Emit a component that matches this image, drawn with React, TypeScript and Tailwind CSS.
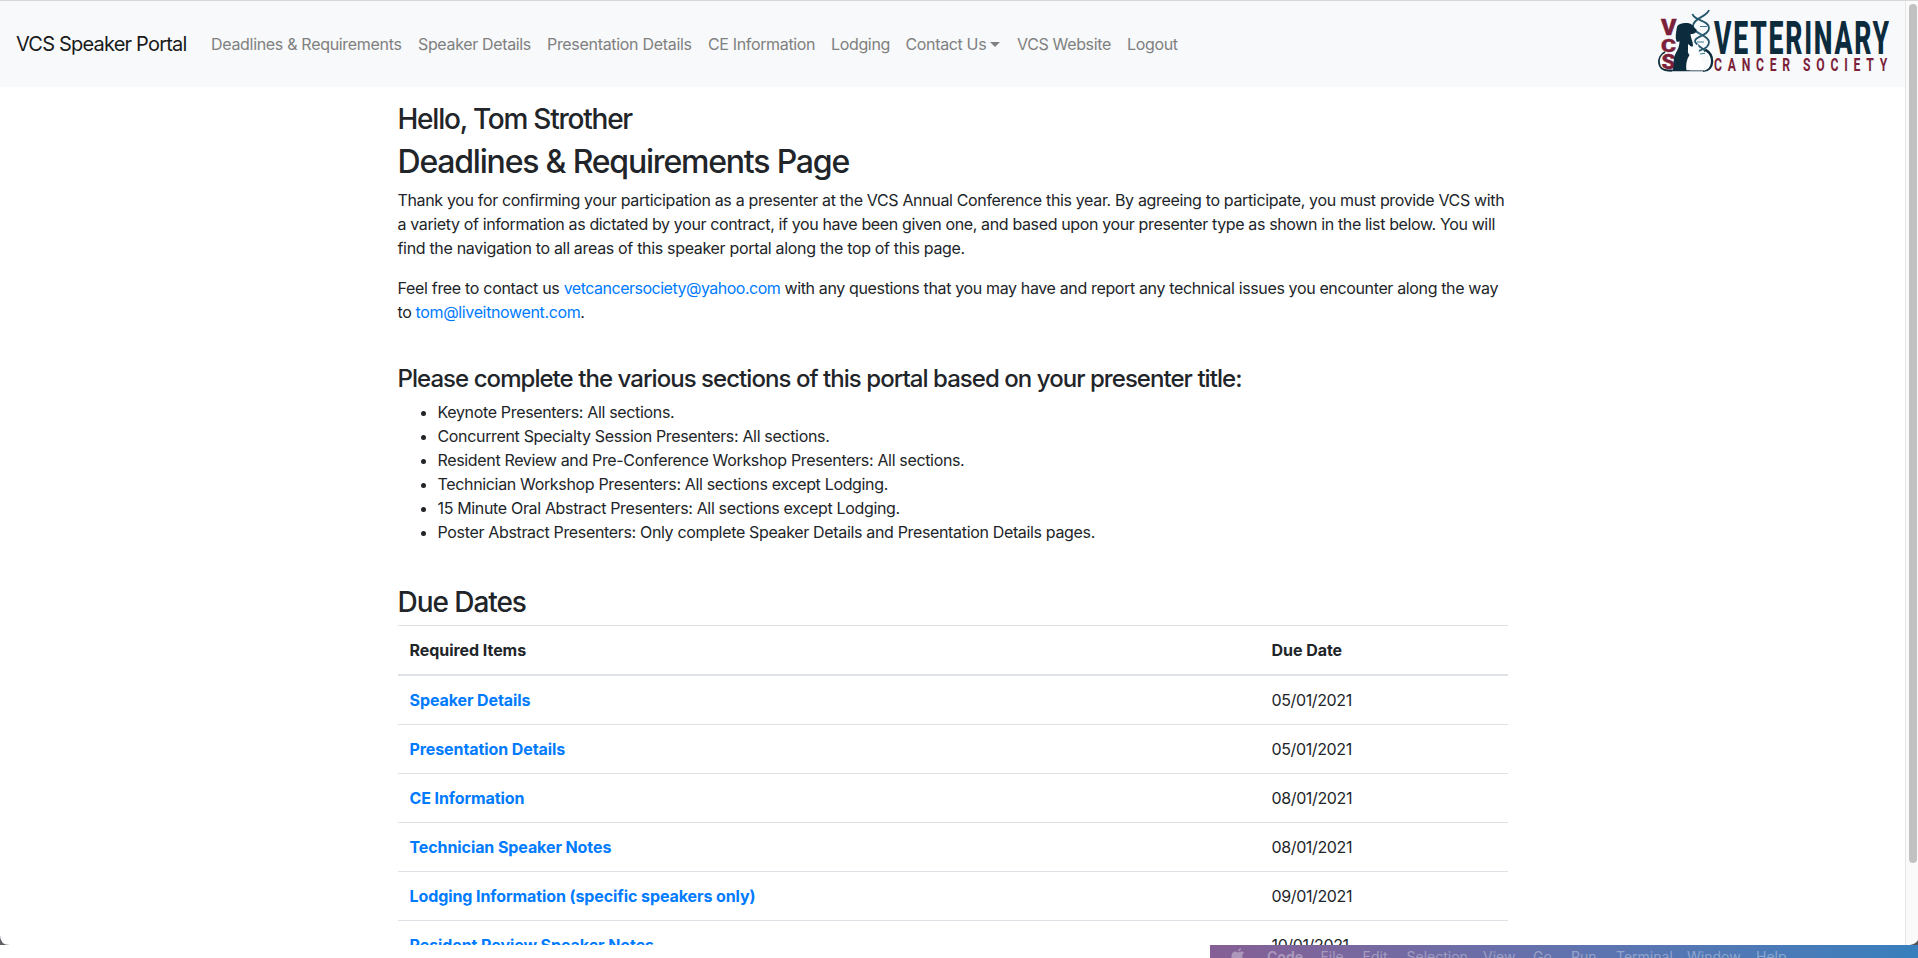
import React from "react";

const navLinks = [
  { label: "Deadlines & Requirements", cls: "w-[191px] tracking-[-0.31px]" },
  { label: "Speaker Details", cls: "w-[113px]" },
  { label: "Presentation Details", cls: "w-[145px] tracking-[-0.31px]" },
  { label: "CE Information", cls: "w-[107px]" },
  { label: "Lodging", cls: "w-[58.5px]" },
  { label: "Contact Us", cls: "w-[95.5px]", caret: true },
  { label: "VCS Website", cls: "w-[94px]" },
  { label: "Logout", cls: "w-[51px]" },
];

const sections = [
  "Keynote Presenters: All sections.",
  "Concurrent Specialty Session Presenters: All sections.",
  "Resident Review and Pre-Conference Workshop Presenters: All sections.",
  "Technician Workshop Presenters: All sections except Lodging.",
  "15 Minute Oral Abstract Presenters: All sections except Lodging.",
  "Poster Abstract Presenters: Only complete Speaker Details and Presentation Details pages.",
];

const dueDates = [
  ["Speaker Details", "05/01/2021"],
  ["Presentation Details", "05/01/2021"],
  ["CE Information", "08/01/2021"],
  ["Technician Speaker Notes", "08/01/2021"],
  ["Lodging Information (specific speakers only)", "09/01/2021"],
  ["Resident Review Speaker Notes", "10/01/2021"],
];

const menu = [
  { label: "Code", cls: "w-[53.5px] font-bold" },
  { label: "File", cls: "w-[42px]" },
  { label: "Edit", cls: "w-[44px]" },
  { label: "Selection", cls: "w-[76.5px]" },
  { label: "View", cls: "w-[50px]" },
  { label: "Go", cls: "w-[38px]" },
  { label: "Run", cls: "w-[45px]" },
  { label: "Terminal", cls: "w-[71px]" },
  { label: "Window", cls: "w-[69px]" },
  { label: "Help", cls: "w-[40px]" },
];

function Logo() {
  return (
    <svg width="240" height="70" viewBox="0 0 240 70" className="shrink-0" fontFamily="Roboto, sans-serif">
      <g fill="none" stroke="#24566c" strokeWidth="1.8">
        <path d="M60 1C58 8 44 9 44 17s16 9 16 16-8 7-14 11" />
        <path d="M43.500 5C45 12 60 11 60 19S46 27 46 32s13 8 14 16" />
        <path d="M51 17.500h7M48 33h7M49 24l4 2M51 45l6-1" strokeWidth="1.200" stroke="#3d7e96" />
      </g>
      <g fill="#7b1f3a" stroke="#7b1f3a" strokeWidth=".4" fontWeight="900">
        <text x="12" y="26" fontSize="21.500" textLength="15.500" lengthAdjust="spacingAndGlyphs">V</text>
        <text x="12" y="42.500" fontSize="19" textLength="15" lengthAdjust="spacingAndGlyphs">C</text>
        <text x="12.500" y="60" fontSize="20" textLength="14" lengthAdjust="spacingAndGlyphs">S</text>
      </g>
      <path d="M23 61.500H19c-11 0-12-14-3-18.500" fill="none" stroke="#0c2c3d" strokeWidth="1.8" />
      <path d="M28 18c1-3 5-4 9-4 4.500 0 7 2 8 4.500l2.500 2c0 3.500-2 4.500-6 4.500 0 4 2.500 7 2.500 12l-3 8v17H22.500c4-4 1-9 3-15 2-5 5-8 5-15-1 1-2 1-3 .5-1.500-4-.5-9 .5-14.500z" fill="#0c2c3d" />
      <path d="M56 41c9 5 9.500 19-2 20.500" fill="none" stroke="#0c2c3d" strokeWidth="3.200" />
      <path d="M56 43c7 5 7 16-2 18" fill="none" stroke="#fff" strokeWidth="1.900" />
      <path d="M39 35l3 2.500h4l3-2.500 1 7c-.5 2-1.500 3-1.500 4 4.500 3 8 9 6.500 15.500H37.500c-1-5 0-11 3-15.500-1-1-2-3-1.500-5z" fill="#fff" />
      <path d="M20 61.800h35" stroke="#0c2c3d" strokeWidth=".8" />
      <text transform="translate(65 45.300) scale(.58 1)" fontSize="45.800" fontWeight="800" fill="#0c2c3d" textLength="302" lengthAdjust="spacing">VETERINARY</text>
      <g fill="#7b1f3a" fontSize="17.900" fontWeight="700">
        <text transform="translate(65 62.300) scale(.68 1)" textLength="112" lengthAdjust="spacing">CANCER</text>
        <text transform="translate(154 62.300) scale(.68 1)" textLength="124" lengthAdjust="spacing">SOCIETY</text>
      </g>
    </svg>
  );
}

export default function App() {
  return (
    <div className="flex h-[958px] w-full flex-col overflow-hidden bg-white font-[Inter,sans-serif] text-base leading-6 text-[#212529]">
      <div className="relative flex h-[945px] shrink-0 overflow-hidden border-t border-[#d6d7da]">
        <div className="flex min-w-0 grow flex-col overflow-hidden">
          <nav className="flex h-[86px] shrink-0 items-center bg-[#f8f9fa] px-4">
            <a className="mr-6 w-[171px] whitespace-nowrap text-xl leading-[30px] tracking-[-0.8px] text-[#191a1b]">VCS Speaker Portal</a>
            <div className="flex grow gap-4 whitespace-nowrap tracking-[-0.35px] text-[#7f8080]">
              {navLinks.map((l) => (
                <a key={l.label} className={`flex items-center ${l.cls}`}>
                  {l.label}
                  {l.caret && <span className="ml-1 border-x-[5px] border-t-[5px] border-x-transparent border-t-[#7f8080]" />}
                </a>
              ))}
            </div>
            <Logo />
          </nav>
          <main className="mx-auto w-[1110px] pt-[15.5px]">
            <h3 className="mb-[7px] text-[28px] leading-[33.6px] font-medium tracking-[-1.23px]">Hello, Tom Strother</h3>
            <h2 className="mb-[6.5px] text-[32px] leading-[38.4px] font-medium tracking-[-1.2px]">Deadlines &amp; Requirements Page</h2>
            <div className="mb-4 whitespace-nowrap">
              <p className="tracking-[-0.345px]">Thank you for confirming your participation as a presenter at the VCS Annual Conference this year. By agreeing to participate, you must provide VCS with</p>
              <p className="tracking-[-0.365px]">a variety of information as dictated by your contract, if you have been given one, and based upon your presenter type as shown in the list below. You will</p>
              <p className="tracking-[-0.32px]">find the navigation to all areas of this speaker portal along the top of this page.</p>
            </div>
            <div className="mb-[41px] whitespace-nowrap tracking-[-0.36px]">
              <p><span className="tracking-[-0.31px]">Feel free to contact us </span><a className="tracking-[-0.5px] text-[#007bff]">vetcancersociety@yahoo.com</a> with any questions that you may have and report any technical issues you encounter along the way</p>
              <p>to <a className="text-[#007bff]">tom@liveitnowent.com</a>.</p>
            </div>
            <h4 className="mb-1.5 text-2xl leading-[28.8px] font-medium tracking-[-0.95px]">Please complete the various sections of this portal based on your presenter title:</h4>
            <ul className="mb-[42px] list-disc pl-10 tracking-[-0.34px]">
              {sections.map((s) => <li key={s}>{s}</li>)}
            </ul>
            <h3 className="mb-1.5 text-[28px] leading-[33.6px] font-medium tracking-[-1.05px]">Due Dates</h3>
            <div className="tracking-[-0.37px]">
              <div className="grid grid-cols-[862px_1fr] border-t border-b-2 border-[#dee2e6] font-bold tracking-[-0.05px]">
                <div className="p-3">Required Items</div>
                <div className="p-3">Due Date</div>
              </div>
              {dueDates.map(([item, date]) => (
                <div key={item} className="grid grid-cols-[862px_1fr] border-b border-[#dee2e6]">
                  <div className="p-3 font-bold tracking-[-0.09px] text-[#007bff]">{item}</div>
                  <div className="p-3">{date}</div>
                </div>
              ))}
            </div>
          </main>
        </div>
        <div className="w-[13px] shrink-0 border-l border-[#e6e6e6] bg-[#fafafa] pt-[3px] pl-[3px]">
          <div className="h-[859px] w-2 rounded-full bg-[#c1c1c1]" />
        </div>
        <svg className="absolute bottom-0 left-0" width="10" height="10"><path d="M0 0Q0 10 10 10H0z" fill="#626066" /></svg>
        <svg className="absolute right-0 bottom-0" width="8" height="5"><path d="M8 0Q6 4 0 5H8z" fill="#555" /></svg>
      </div>
      <div className="ml-[1210px] flex h-[13px] overflow-hidden bg-linear-to-r from-[#855f95] via-[#5c74b0] via-55% to-[#387fbd] pl-[21px] text-sm leading-6 whitespace-nowrap text-white/35">
        <svg width="14" height="16" viewBox="0 0 14 16" className="mt-[3px] mr-[22px] shrink-0" fill="currentColor">
          <path d="M10 0c0 2-1.500 3.500-3 3.500C7 1.500 8.500.3 10 0zM7 4.500c1 0 2-1 3.500-1 1 0 2 .5 2.500 1.500-3 2-2 5 .5 6-1 3-2.500 5-4 5-1 0-1.500-.5-2.500-.5S5.500 16 4.500 16C2.500 16 .5 12 .5 8.500s2-5 4-5c1 0 2 1 2.500 1z" />
        </svg>
        {menu.map((m) => <span key={m.label} className={`shrink-0 ${m.cls}`}>{m.label}</span>)}
      </div>
    </div>
  );
}
